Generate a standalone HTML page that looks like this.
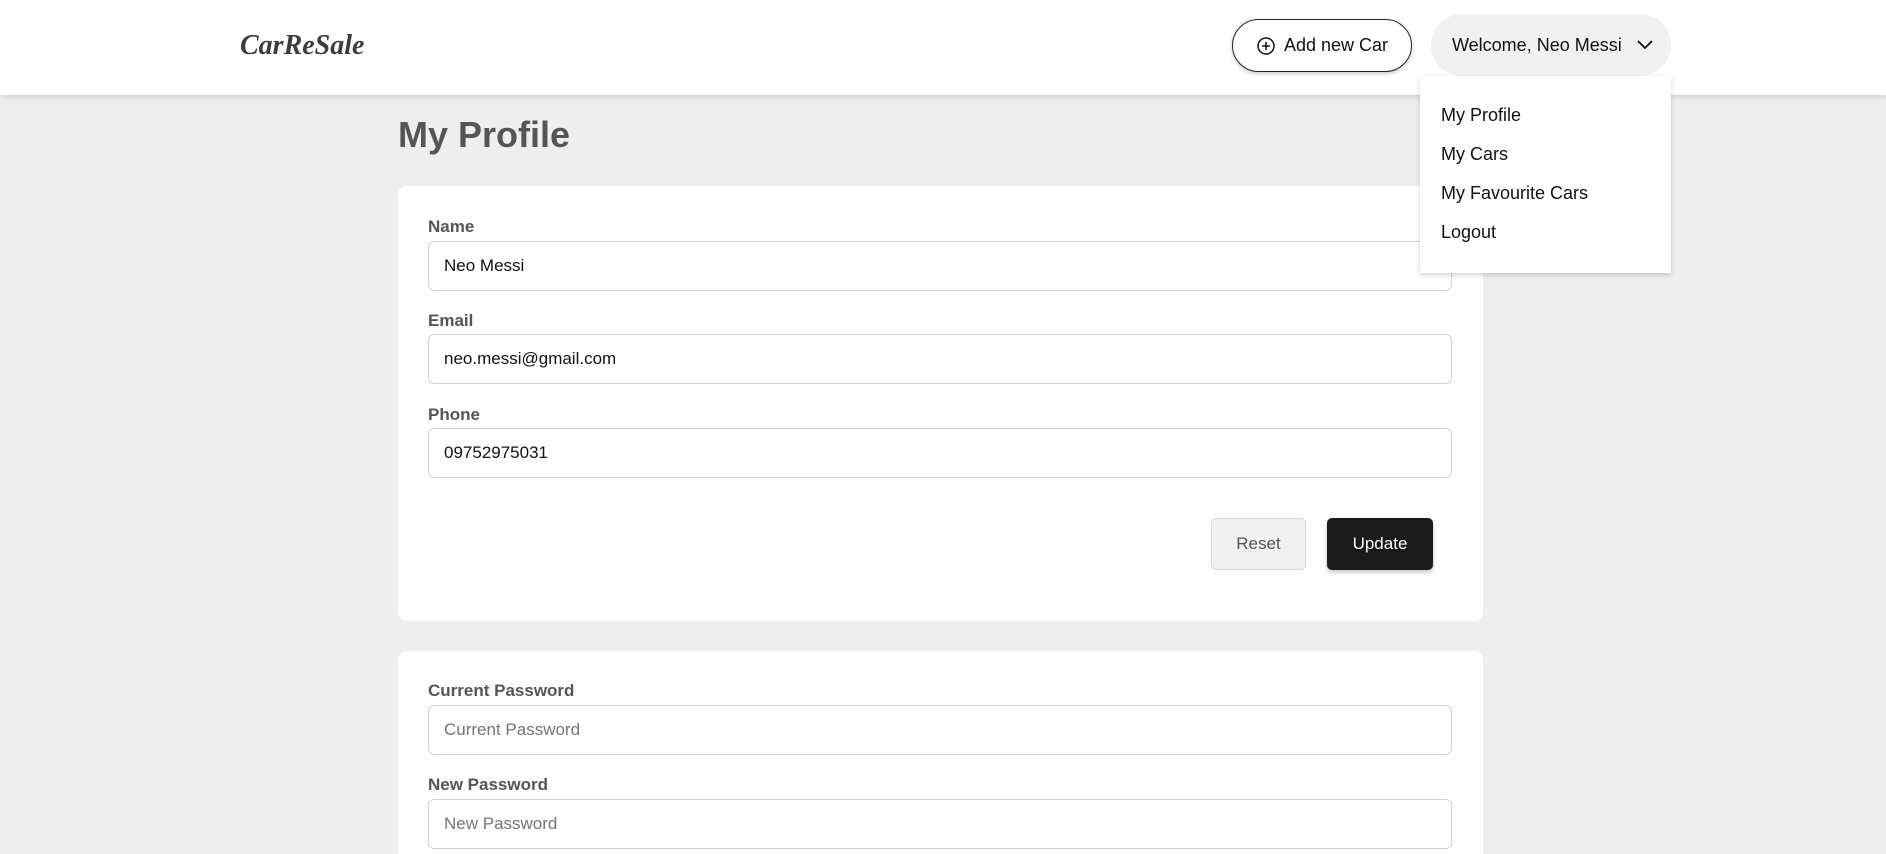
<!DOCTYPE html>
<html><head><meta charset="utf-8"><style>
*{box-sizing:border-box;margin:0;padding:0}
html{width:1886px;height:854px;overflow:hidden}
body{width:1886px;height:854px;overflow:hidden;background:#eeeeee;font-family:"Liberation Sans",sans-serif;position:relative}
.hdr{position:absolute;left:0;top:0;width:1886px;height:95px;background:#fff;box-shadow:0 2px 6px rgba(0,0,0,.12)}
.logo{position:absolute;left:240px;top:30px;font-family:"Liberation Serif",serif;font-style:italic;font-weight:bold;font-size:28px;color:#3d3d3d}
.add{position:absolute;left:1232px;top:19px;width:180px;height:53px;border:1.5px solid #222;border-radius:27px;background:#fff;font-size:18px;color:#111;display:flex;align-items:center;justify-content:center;gap:8px;box-shadow:0 2px 4px rgba(0,0,0,.2)}
.wel{position:absolute;left:1431px;top:14px;width:240px;height:62px;border-radius:31px;background:#f1f1f1;font-size:18px;color:#111;display:flex;align-items:center;padding-left:21px;gap:14px}
.dd{position:absolute;left:1420px;top:76px;width:251px;height:197px;background:#fff;box-shadow:0 2px 5px rgba(0,0,0,.18);z-index:3}
.dd div{position:absolute;left:21px;font-size:18px;color:#111}
h1{position:absolute;left:398px;top:114px;font-size:36px;font-weight:bold;color:#555}
.card{position:absolute;left:398px;width:1085px;background:#fff;border-radius:9px}
.lbl{position:absolute;left:428px;font-size:17px;font-weight:bold;color:#555}
.inp{position:absolute;left:428px;width:1024px;height:50px;border:1px solid #d2d2d2;border-radius:6px;background:#fff;font-size:17px;color:#111;padding-left:15px;line-height:48px}
.ph{color:#757575}
.btn{position:absolute;top:518px;height:52px;border-radius:5px;font-size:17px;display:flex;align-items:center;justify-content:center}
</style></head><body>
<div class="hdr">
<div class="logo">CarReSale</div>
<div class="add"><svg width="20" height="20" viewBox="0 0 20 20"><circle cx="10" cy="10" r="8" fill="none" stroke="#111" stroke-width="1.5"/><path d="M10 6v8M6 10h8" stroke="#111" stroke-width="1.6"/></svg>Add new Car</div>
<div class="wel">Welcome, Neo Messi <svg width="18" height="12" viewBox="0 0 18 12"><path d="M2 2l7 7 7-7" fill="none" stroke="#111" stroke-width="1.8"/></svg></div>
</div>
<div class="dd">
<div style="top:29px">My Profile</div>
<div style="top:68px">My Cars</div>
<div style="top:107px">My Favourite Cars</div>
<div style="top:146px">Logout</div>
</div>
<h1>My Profile</h1>
<div class="card" style="top:186px;height:435px"></div>
<div class="card" style="top:651px;height:203px;border-radius:9px 9px 0 0"></div>
<div class="lbl" style="top:217px">Name</div>
<div class="inp" style="top:241px">Neo Messi</div>
<div class="lbl" style="top:311px">Email</div>
<div class="inp" style="top:334px">neo.messi@gmail.com</div>
<div class="lbl" style="top:405px">Phone</div>
<div class="inp" style="top:428px">09752975031</div>
<div class="btn" style="left:1211px;width:95px;background:#f1f1f1;border:1px solid #d8d8d8;color:#555">Reset</div>
<div class="btn" style="left:1327px;width:106px;background:#1a1a1a;color:#fff;box-shadow:0 2px 4px rgba(0,0,0,.25)">Update</div>
<div class="lbl" style="top:681px">Current Password</div>
<div class="inp ph" style="top:705px">Current Password</div>
<div class="lbl" style="top:775px">New Password</div>
<div class="inp ph" style="top:799px">New Password</div>
</body></html>
